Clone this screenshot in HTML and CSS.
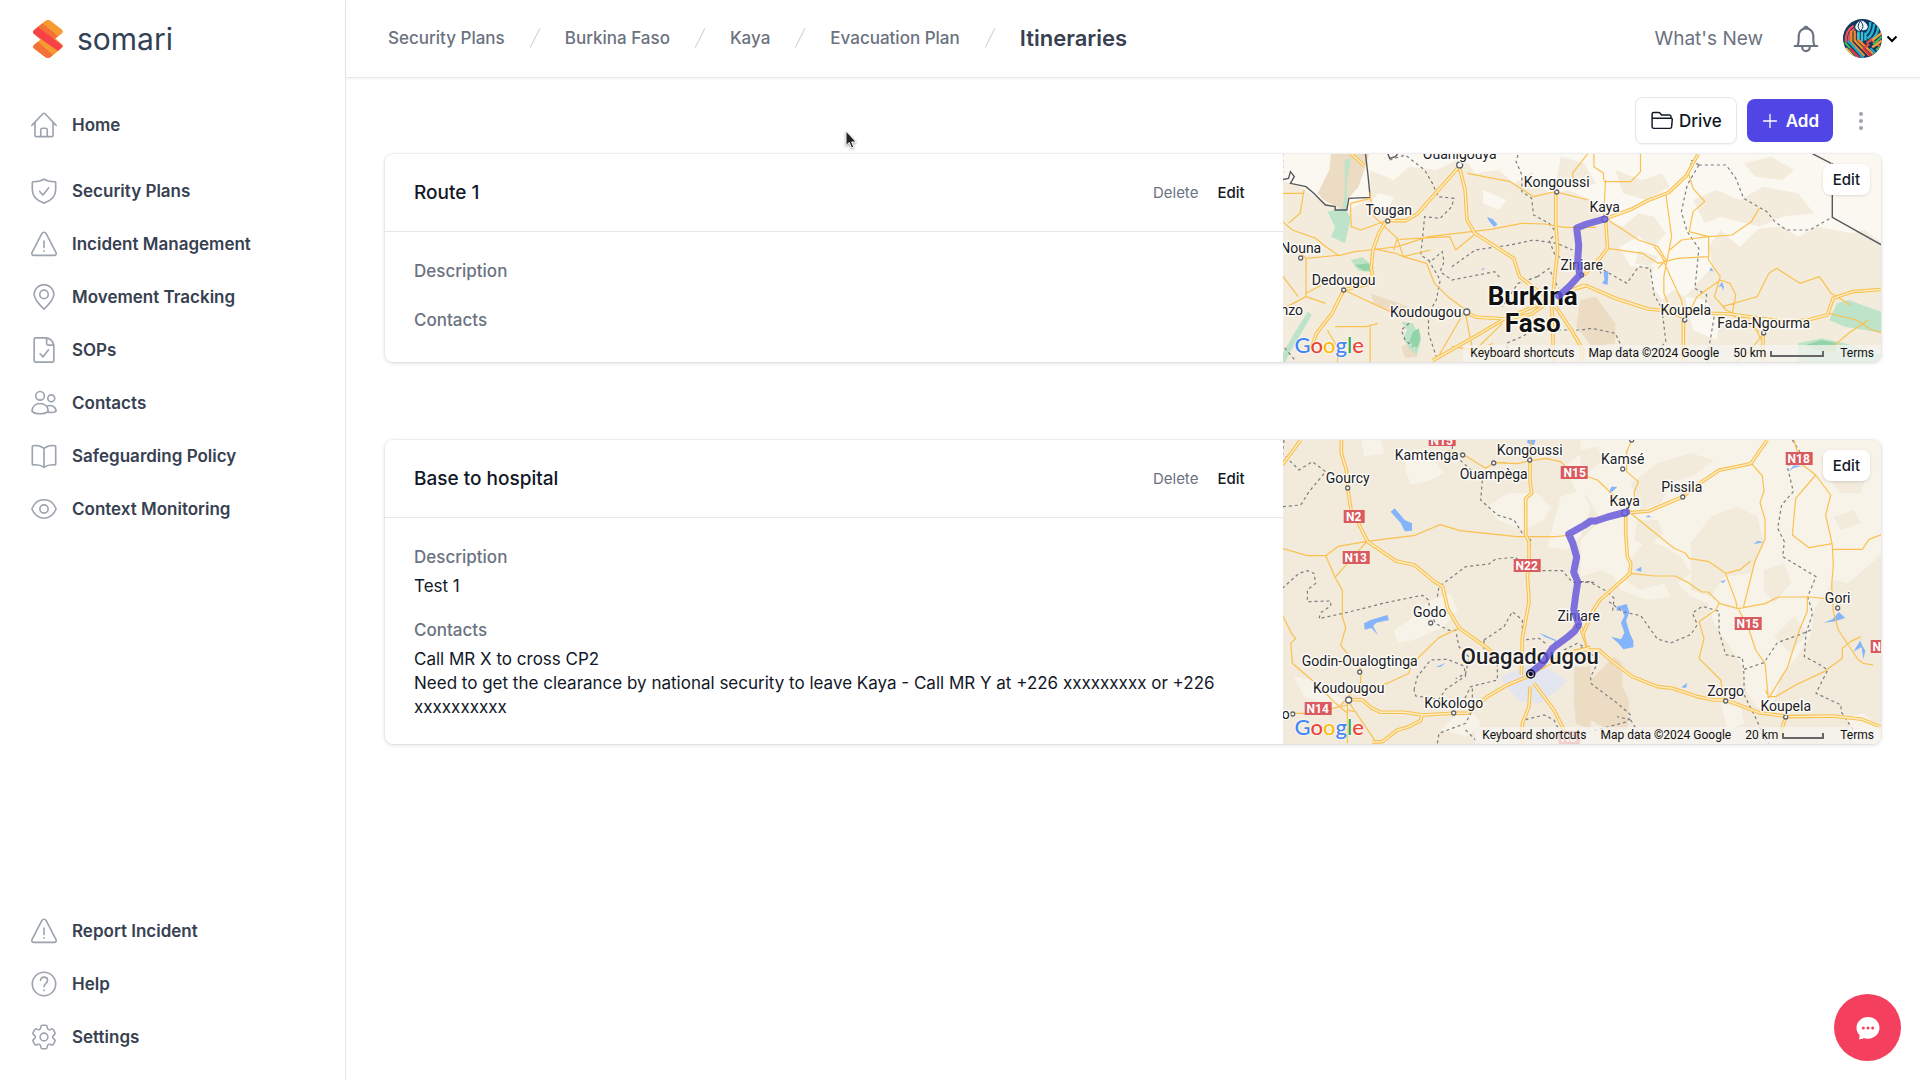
FILE: index.html
```html
<!DOCTYPE html>
<html lang="en">
<head>
<meta charset="utf-8">
<title>Itineraries - Somari</title>
<link rel="stylesheet" href="styles.css">
</head>
<body>
<svg class="sprite" aria-hidden="true">
  <symbol id="i-home" viewBox="0 0 24 24"><path d="M.8 12.3 11 1.6a1.4 1.4 0 0 1 2 0L23.2 12.3M3.7 9.5v12.2a1 1 0 0 0 1 1h14.6a1 1 0 0 0 1-1V9.5M9 22.5v-6A1.5 1.5 0 0 1 10.500 15h3a1.500 1.500 0 0 1 1.500 1.500v6"/></symbol>
  <symbol id="i-shield" viewBox="0 0 24 24"><path d="M12 1C9.300 2.900 6 3.500 2.200 3.400c-.6 0-1 .4-1 1v6.300C1.200 16.500 5 21 12 23.200c7-2.200 10.800-6.700 10.800-12.500V4.400c0-.6-.4-1-1-1C18 3.500 14.700 2.900 12 1ZM8 12.400l3 3.300 5.200-6.500"/></symbol>
  <symbol id="i-alert" viewBox="0 0 24 24"><path d="M10.100 2.300.9 19.900c-.7 1.300.2 2.600 1.600 2.600h19c1.400 0 2.300-1.300 1.600-2.600L13.900 2.300c-.9-1.600-3-1.600-3.800 0ZM12 9.300v6M12 18.200v.4"/></symbol>
  <symbol id="i-pin" viewBox="0 0 24 24"><path d="M12 23.200C8.500 19.700 2.900 14.500 2.900 9.700a9.100 9.100 0 0 1 18.200 0c0 4.800-5.600 10-9.100 13.500Z"/><circle cx="12" cy="9.600" r="3.900"/></symbol>
  <symbol id="i-doc" viewBox="0 0 24 24"><path d="M14.200.8H4.300a1.400 1.400 0 0 0-1.400 1.400v19.600a1.400 1.400 0 0 0 1.400 1.400h15.400a1.400 1.400 0 0 0 1.400-1.400V7.500Q20 2 14.200.8Q14.600 3 14.400 5.800Q14.500 7.500 16 7.500h5M8.400 15.500l2.800 2.800 5-6.500"/></symbol>
  <symbol id="i-users" viewBox="0 0 24 24"><circle cx="8.400" cy="5.400" r="4"/><circle cx="18.700" cy="7.700" r="3.200"/><path d="M.9 19.500c.3-4.300 3.300-7 7.500-7s7.200 2.700 7.500 7c-1.500 1.800-4.300 2.400-7.500 2.400S2.400 21.300.9 19.500ZM14.400 15.500c3.700-2.400 8.200-.9 8.800 4-1.600 1.100-4.400 1.600-7.600.9"/></symbol>
  <symbol id="i-book" viewBox="0 0 24 24"><path d="M12 5C9.300 2.800 5.800 2 1.900 2.500c-.5.100-.7.400-.7.900v16c0 .6.400.9.900.8 3.700-.4 7 .2 9.900 2.300 2.900-2.100 6.200-2.700 9.900-2.300.5.100.9-.2.900-.8v-16c0-.5-.2-.8-.7-.9C18.200 2 14.700 2.800 12 5ZM12 5v17"/></symbol>
  <symbol id="i-eye" viewBox="0 0 24 24"><path d="M.8 11.800C3 6.500 7 3.500 12 3.500s9 3 11.200 8.300C21 17.500 17 20.500 12 20.500s-9-3-11.200-8.700Z"/><circle cx="12" cy="12" r="3.800"/></symbol>
  <symbol id="i-help" viewBox="0 0 24 24"><circle cx="12" cy="12" r="10.800"/><path d="M8.800 8.800c0-1.800 1.400-3.100 3.200-3.100s3.300 1.300 3.300 3.100c0 2.600-3.300 2.700-3.300 5.700M12 17.600v.5"/></symbol>
  <symbol id="i-cog" viewBox="2 2 20 20"><path d="M9.594 3.940c.09-.542.56-.94 1.110-.94h2.593c.55 0 1.020.398 1.110.94l.213 1.281c.063.374.313.686.645.87.074.04.147.083.22.127.325.196.72.257 1.075.124l1.217-.456a1.125 1.125 0 0 1 1.370.49l1.296 2.247a1.125 1.125 0 0 1-.26 1.431l-1.003.827c-.293.241-.438.613-.43.992a7.723 7.723 0 0 1 0 .255c-.008.378.137.75.43.991l1.004.827c.424.35.534.955.26 1.430l-1.298 2.247a1.125 1.125 0 0 1-1.369.491l-1.217-.456c-.355-.133-.75-.072-1.076.124a6.470 6.470 0 0 1-.22.128c-.331.183-.581.495-.644.869l-.213 1.281c-.09.543-.56.94-1.110.94h-2.594c-.55 0-1.019-.398-1.110-.94l-.213-1.281c-.062-.374-.312-.686-.644-.87a6.520 6.520 0 0 1-.22-.127c-.325-.196-.72-.257-1.076-.124l-1.217.456a1.125 1.125 0 0 1-1.369-.49l-1.297-2.247a1.125 1.125 0 0 1 .26-1.431l1.004-.827c.292-.24.437-.613.43-.991a6.932 6.932 0 0 1 0-.255c.007-.38-.138-.751-.43-.992l-1.004-.827a1.125 1.125 0 0 1-.26-1.430l1.297-2.247a1.125 1.125 0 0 1 1.370-.491l1.216.456c.356.133.751.072 1.076-.124.072-.044.146-.086.22-.128.332-.183.582-.495.644-.869l.214-1.280Z"/><circle cx="12" cy="12" r="3"/></symbol>
  <symbol id="i-slash" viewBox="0 0 20 20"><path d="M5.555 17.776l8-16 .894.448-8 16-.894-.448z"/></symbol>
</svg>

<div class="app">
  <aside class="sidebar">
    <a class="brand" href="#">
      <svg class="brand-mark" viewBox="0 0 30 38" aria-hidden="true">
        <defs><clipPath id="mark"><path d="M12.500.8Q15-1 17.500.8L28.800 9.500Q31 11.500 28.800 13.500L22.500 18.500 28.600 24Q31 26 28.800 28L17.500 37.200Q15 39 12.500 37.200L1 28.500Q-.8 26.500 1.200 24.800L7.500 19.500 1 14Q-1 12 1 10Z"/></clipPath></defs>
        <g clip-path="url(#mark)">
          <path fill="#f79a31" d="M0 0h30v38H0z"/>
          <path fill="#f47238" d="M9 3 25 16 20 20 2 8ZM4 21 20 35 14 40-3 26Z"/>
          <path fill="#f94149" d="M5 7 30 26 25 31-2 12Z"/>
        </g>
      </svg>
      <span>somari</span>
    </a>
    <nav class="nav" aria-label="Main">
      <a class="nav-home" href="#"><svg><use href="#i-home"/></svg>Home</a>
      <a href="#"><svg><use href="#i-shield"/></svg>Security Plans</a>
      <a href="#"><svg><use href="#i-alert"/></svg>Incident Management</a>
      <a href="#"><svg><use href="#i-pin"/></svg>Movement Tracking</a>
      <a href="#"><svg><use href="#i-doc"/></svg>SOPs</a>
      <a href="#"><svg><use href="#i-users"/></svg>Contacts</a>
      <a href="#"><svg><use href="#i-book"/></svg>Safeguarding Policy</a>
      <a href="#"><svg><use href="#i-eye"/></svg>Context Monitoring</a>
    </nav>
    <nav class="nav nav-bottom" aria-label="Support">
      <a href="#"><svg><use href="#i-alert"/></svg>Report Incident</a>
      <a href="#"><svg><use href="#i-help"/></svg>Help</a>
      <a href="#"><svg class="cog"><use href="#i-cog"/></svg>Settings</a>
    </nav>
  </aside>

  <div class="page">
    <header class="topbar">
      <nav class="crumbs" aria-label="Breadcrumb">
        <a href="#">Security Plans</a>
        <svg><use href="#i-slash"/></svg>
        <a href="#">Burkina Faso</a>
        <svg><use href="#i-slash"/></svg>
        <a href="#">Kaya</a>
        <svg><use href="#i-slash"/></svg>
        <a href="#">Evacuation Plan</a>
        <svg><use href="#i-slash"/></svg>
        <h1>Itineraries</h1>
      </nav>
      <div class="topbar-right">
        <a class="whats-new" href="#">What's New</a>
        <button class="bell" aria-label="Notifications">
          <svg viewBox="0 0 24 26"><path d="M1.500 19.500h21M3.800 19.300c1.400-1.200 1.400-3.200 1.400-6.800V10a6.800 6.800 0 0 1 13.600 0v2.500c0 3.600 0 5.600 1.400 6.800M10.500 3.200a1.500 1.500 0 0 1 3 0M8.500 20v.8a3.500 3.500 0 0 0 7 0V20"/></svg>
        </button>
        <button class="account" aria-label="Account menu">
          <svg class="avatar" viewBox="0 0 40 40">
            <defs><clipPath id="av"><circle cx="20" cy="20" r="20"/></clipPath></defs>
            <g clip-path="url(#av)" fill="none" stroke-width="2.400">
              <path fill="#12365c" d="M0 0h40v40H0z"/>
              <path stroke="#e8525c" d="M3 24Q2 12 11 7M6 25Q5 14 12 10"/>
              <path stroke="#f58a2c" d="M8.500 12V24L22 38M12 12V22L27 37M15.500 14V21L31 36"/>
              <path stroke="#35c4dd" d="M16 21V12M19.500 23V13M23 22V14"/>
              <path stroke="#27b6d4" d="M25 20Q31 16 32 5M27 23Q36 17 36 8M24 15Q28 11 28 3"/>
              <path stroke="#e84a3b" d="M24 25 29 21 40 30M22 29 27 26"/>
              <path stroke="#f5a13a" d="M30 22 40 14M30 29 40 22"/>
              <path stroke="#3bb85a" d="M31 26 40 18M2 24 16 40M34 32l6-5"/>
              <path stroke="#1ea7c9" d="M5 22 21 40M28 30l8 8"/>
              <path stroke="#e02a50" d="M7 30l10 10M21 30l10 10"/>
              <path stroke="#f7c948" d="M3 30l9 10"/>
              <path fill="#eaf6fb" stroke="#12365c" stroke-width="1" d="M18.500 1Q12 4 12 9Q15 14 18 12Q25 13 26 8Q24 2 18.500 1ZM18 2Q13 8 18 12Q23 8 18 2"/>
            </g>
          </svg>
          <svg class="chevron" viewBox="0 0 12 8"><path d="M1.500 1.500 6 6l4.500-4.500"/></svg>
        </button>
      </div>
    </header>

    <main class="content">
      <div class="toolbar">
        <button class="btn btn-outline">
          <svg viewBox="0 0 24 20"><path d="M1.200 7.500V3a1.800 1.800 0 0 1 1.800-1.800h5.200a2 2 0 0 1 1.500.7L11.500 4H20a1.800 1.800 0 0 1 1.800 1.800V7.500M2.600 7.500h19.400a1.200 1.200 0 0 1 1.200 1.200L22.500 17a1.800 1.800 0 0 1-1.800 1.600H3A1.800 1.800 0 0 1 1.200 17V8.500a1 1 0 0 1 1.400-1Z"/></svg>
          Drive
        </button>
        <button class="btn btn-primary">
          <svg viewBox="0 0 16 16"><path d="M8 1.500v13M1.500 8h13"/></svg>
          Add
        </button>
        <button class="more" aria-label="More options">
          <svg viewBox="0 0 4 20"><circle cx="2" cy="3" r="2"/><circle cx="2" cy="10" r="2"/><circle cx="2" cy="17" r="2"/></svg>
        </button>
      </div>

      <article class="card">
        <div class="card-info">
          <div class="card-head">
            <h2>Route 1</h2>
            <button class="link muted">Delete</button>
            <button class="link">Edit</button>
          </div>
          <dl>
            <dt>Description</dt>
            <dd></dd>
            <dt>Contacts</dt>
            <dd></dd>
          </dl>
        </div>
        <div class="map">
          <svg class="map-art" viewBox="0 0 599 208" preserveAspectRatio="xMidYMid slice" role="img" aria-label="Map of Route 1">
            <defs>
              <g id="m1-major" class="road-lines" transform="translate(-2 -4) scale(.389 .3333)">
                <path d="M180 10l35 38M276 212h45l30-20 110-145M459 50l15 70 5 90 20 40 40 30 60 45 15 55 50 45 40 30M232 360l5-60 15-50 20-38M235 360l0 40-40 10-33 10-30 70-40 60-15 50M475 487l30 15 80 5 60-15 60-50 50-25 30-10 80 40 80 30 90 10 120 5 90 15 50 8 60-5 50-15 15-50 50-20 90-8M575 507l-65 45-60 40-60 40M707 130v90l5 80-10 110-5 60 5 165M707 470l40 70 30 60-5 35M835 205l5 90-20 30-40 50M833 207l70-30 40-25 55-25 45-50 30-65M1035 510v125M780 405l-60 30M690 450l-110 55M1240 550v85"/>
              </g>
            </defs>
            <path class="land" d="M0 0h599v208H0z"/>
            <g transform="translate(-2 -4) scale(.389 .3333)">
              <path class="pale" d="M0 0H640L655 60 600 100 560 60 500 70 470 20 400 60 330 50 290 90 230 60V140L170 185 100 150 50 110 0 90ZM640 0H1560V290L1500 240 1470 250 1380 230 1330 260 1290 230 1230 235 1180 290 1130 240 1100 290 1110 350 1070 400 1040 440 1010 420 980 450 950 400 960 350 900 350 870 290 920 260 960 290 990 250 960 200 920 190 880 230 830 210 800 150 740 120 690 130 650 90ZM1040 440l50 10 40 60-10 60-60-30ZM250 130l40 10-10 30-60 10ZM520 120l60 30-20 30-40-20Z"/>
              <path class="land" d="M720 20l60 20 30 60-50 20-50-40ZM860 60l70 30 50-20 20 40-60 40-60-20ZM1060 150l60-30 60 30 60-40 90 20 40 60-80 10-60 30-100-30-40 20ZM1190 40l70-20 60 40-30 30-70-10ZM330 90l40-20 20 30-40 30ZM920 300l50 20-20 30-40-10Z"/>
              <path class="sand" d="M130 0H230L215 60 200 110 170 150 170 185 110 150 95 130 125 60ZM770 450l40-10 50 80v60l-60 10-40-60ZM230 430l50 20 70 30-10 30-60-30-40-20ZM310 590l40-20v50l-30 5Z"/>
              <path class="park" d="M165 30l15-5-10 70 0 90 10 20-15 75-35-20 10-30-20-45 40-10 5-60ZM180 330l30-8 30 30-5 15-35-5ZM310 515l30 5 10 25 10 30-10 40-20-20-15-30 10-25ZM0 620l40-80 30-55 10 10-30 60-30 60-10 30ZM1430 460l30-10 70 30 30 10v60l-60-10-50-10-40-20ZM1330 580l60-15 60 15 110 40v20H1330Z"/>
              <path class="park-deep" d="M190 345l35-5 10 20-20 3ZM340 545l15-10 5 30-10 30-20-20ZM1350 585l40-15 40 10-5 25-50-5Z"/>
              <path class="water" d="M530 200l15 8 12 15-8 8-12-16ZM830 365l12-2 0 20-2 22-14-5 6-10ZM1105 352l8 12-10-2ZM1135 395l4 15-2 12-4-14-8 4ZM515 358l10-5-5 8ZM704 122l8-6v14l-6 3Z"/>
              <path class="city" d="M685 465l25-5 15 15-25 12Z"/>
              <g class="dashes">
                <path d="M5 10v60M280 30l40-15 50 45 20 40 15 40 40 5-5 25-30 35-40-5-5 60-5 55 25 20 30-30 5 30-10 30 30 25 110-25 15 20M610 15l-5 20 15 40 0 50 25 20 5 50 40 25 20 30-20 20 15 45 40 20 70 10 10 30M440 350l60-50 90-15 60-15 60 10 40 20M660 380l30-25 15 40 10 20M660 380l-50 20-40 70M830 360l60 40 30-50 30 5 10 80 20 40 10 100-50 70-20 30M1075 45l-20-15 0 25M1075 45l70 0 25 40 20 60 60 40 20 30 30 25 60 0 60-40M1075 45l-30 60-15 80 15 60 30 50 -10 120 30 20-5 50 25 10-20 140M590 630l-10-50 40-20 30-20 60 0 60 0 30-5 60 15 25 60 10 20M380 330l30 60-10 60-20 40 0 60 20 70M0 580l40 55M330 520l-20 20 10 30 20 20"/>
              </g>
              <g class="border">
                <path d="M0 90l20-5 5-20 10 15-10 20 40 10 20 20 30 35 25 5 0 10 30 0 5-35 55-3-5-60-8-80M275 10l5 15 15-5 5-8M1365 10l50 30M1418 40V202l130 85"/>
              </g>
              <g class="minor">
                <path d="M0 210l30 30 60 25 20 20 40 32 40-12 40-5 70-10 80-30 160-22 80-18 60 2 50 10h80M180 210l0-50 50-15 0-20M230 140l10 60 60 65-10 35M276 210l-70 30-25-10v-20M300 265l15 55-20-10-60-15M315 320l70-20M450 300l50-48M450 300l-15-40-130 8M315 320l60 20 20 60 35 40 40 35M35 290l30 35 0 115-65 40M65 430l40-25M65 440l50 20M162 420l120 65M65 325l90-10M0 370l45 70M475 490l20 120 50-30M470 490l-70 140M440 590l60 10 70-80M140 530h80l30-10M230 530v110M480 70l110 25 60 45 55-15 85 25M790 10l-40 60 5 35M830 90v-20l-25-20V12M830 95h70l25-30 0-55M835 90l-5 115M835 205l85 65 50 20 20 40-20 25M990 130l15 130-10 60-10 60M840 295l90 15 40 30 50-15 80-5M960 290l20 30 20 55 30 75 10 60M985 380l0 50 20 60 35 20M1000 300l30-30 70-10M1050 75l10 40 30 40-30 30-10 60 50 15v70l30 50-15 60 30 40 70 40 20 50M1100 260l60-5 50-40 20-40M1130 390l-60 50-30 70M1130 390l25 10 15 35-10 60 70 50M1135 470l60-20 30-10 30-70 20-15 60 45 50-20 30 50 50 35M1250 540l-50 70-30 25M1410 490l70 20 40 30 30 10M1400 610l60-60 50-40M60 120l-10 70-30 30M0 130l60 0M120 540l30 60-5 40"/>
              </g>
            </g>
            <use href="#m1-major" class="major"/>
            <use href="#m1-major" class="major-core"/>
            <g class="towns">
              <circle cx="177" cy="11" r="3"/><circle cx="274" cy="38" r="2"/><circle cx="322" cy="65" r="3"/><circle cx="105" cy="67" r="2"/><circle cx="18" cy="104" r="2"/><circle cx="61" cy="136" r="2"/><circle cx="184" cy="158" r="3"/><circle cx="299" cy="121" r="2"/><circle cx="402" cy="166" r="2"/><circle cx="481" cy="179" r="2"/>
            </g>
            <g class="places">
              <text x="177" y="5">Ouahigouya</text><text x="274" y="33">Kongoussi</text><text x="322" y="58">Kaya</text><text x="106" y="61">Tougan</text><text x="18" y="99">Nouna</text><text x="61" y="131">Dedougou</text><text x="9" y="161">nzo</text><text x="143" y="163">Koudougou</text><text x="299" y="116">Ziniare</text><text x="403" y="161">Koupela</text><text x="481" y="174">Fada-Ngourma</text>
              <text class="country" x="250" y="151">Burkina</text><text class="country" x="250" y="178">Faso</text>
            </g>
            <path class="route" d="M322 65 304 70 294 74 296 91 295 107 297 121 287 132 276 142"/>
          </svg>
          <button class="map-edit">Edit</button>
          <div class="google" aria-label="Google"><span class="g-blue">G</span><span class="g-red">o</span><span class="g-yellow">o</span><span class="g-blue">g</span><span class="g-green">l</span><span class="g-red">e</span></div>
          <div class="map-foot"><button>Keyboard shortcuts</button><span>Map data ©2024 Google</span><span class="scale">50 km<i class="bar bar-50"></i></span><a href="#">Terms</a></div>
        </div>
      </article>

      <article class="card">
        <div class="card-info">
          <div class="card-head">
            <h2>Base to hospital</h2>
            <button class="link muted">Delete</button>
            <button class="link">Edit</button>
          </div>
          <dl>
            <dt>Description</dt>
            <dd>Test 1</dd>
            <dt>Contacts</dt>
            <dd>Call MR X to cross CP2<br>Need to get the clearance by national security to leave Kaya - Call MR Y at +226 xxxxxxxxx or +226 xxxxxxxxxx</dd>
          </dl>
        </div>
        <div class="map">
          <svg class="map-art" viewBox="0 0 599 304" preserveAspectRatio="xMidYMid slice" role="img" aria-label="Map of Base to hospital">
            <defs>
              <g id="m2-left" class="road-lines" transform="translate(-2 -10) scale(.3333)">
                <path d="M60 30 5 105M182 30v40l15 50 4 55 10 65 25 45 25 50 85 58 55 12 60 50 25 15 15 65 35 60 85 60 25 25M245 810l25 22 30 15h70l55 8 95-5 40 0 60-50 60-35 60-25M200 808l45 2M425 852l-5 20-40 20-30 8-45 35-30 2M748 90l0 60 5 40-18 15 0 110 10 20v80l-5 20 5 80-20 110-3 110M748 770l-3 60-20 50 0 60M760 760l60 80 30 60 10 40M770 720l90-50 70-18"/>
              </g>
              <g id="m2-right" class="road-lines" transform="translate(298 -10) scale(.3333)">
                <path d="M150 248l55-5 100-42 50-40 60-40 95-20 50-71M135 250v60l5 70 10 20-2 30-90 80-20 30-30 70M0 660l55 0 40 35 60 45 75 30 45 5 75 25 50 10h35l100 38 90 12 130-2 90 10 60 25M615 862l-20 60"/>
              </g>
            </defs>
            <path class="land-2" d="M0 0h599v304H0z"/>
            <g transform="translate(-2 -10) scale(.3333)">
              <path class="pale-2" d="M370 60l80 20 40 50-40 20-60 15-15-40ZM240 20l60 10 10 40-60 10ZM620 230l60-40 90 0 40 40-20 40-60 30-80-30ZM840 200l60-20 30 50-30 90-40 40-60-10ZM340 600l60-40 50-50 60-20 20 50-40 50-90 40-50 10ZM480 900l40-40 60-10 20 30-40 40ZM40 740l60 10 90 60-30 20-90-30ZM850 110l80-60V200l-40-10Z"/>
              <path class="city" d="M660 740l50-20 40-20 60 20 50 30-30 30-50 40-60-5-40-40Z"/>
              <path class="sand-2" d="M880 740l50-40V900l-45-20Z"/>
              <path class="water" d="M330 245l12-10 30 35 22 10v22l-22 2-12-25ZM250 580l20-10 50-15 5 15-38 8-10 10 15 28-20-22-20 5ZM740 30h25l-5 15-20-5ZM776 608l50 22-4 40 0-38-30-12ZM465 712l30-14-15 12Z"/>
              <g class="dashes">
                <path d="M10 30l-5 40 50 50 40-25 40 30-50 60-25 40-55 5M5 475l50-45 25-8 20 8 5 30-25 20 0 35 70-2 0 15-30 20-5 18 90-20 110-28 110-22 20 15 0 30 20 40 40 20 20 0 10 50 30 30 -10 50-30 15M515 30v40l90 80-5 60 50 45 50 15 25 40 25 20-5 50M470 500l5-30 80-60 70-8 20-15 60-5 20 20 60 20 60 0 30 35 70 0M610 630l60-40 25-45 30 25 0 60 50-5 25 20M610 630l0 40 40 30 0 50-80 20-20 40M400 780l10-40 40-50 50-2 50 20 5 30-60 40-20 30-70-10ZM470 940l5-30 80-30 20-40 0-70M555 900l40 40M720 900l10-30 60-15 30 15 20 40M850 660l40-20 40 20"/>
              </g>
              <g class="minor">
                <path d="M5 355l75 22h55l38-28 85-15 145-18 75-32 60 18 170 18 20 0 100 0 40-5M135 377l28 65 95-107M163 442l22 40v80l10 30-15 55 60 70 0 40-60 70M5 555l30 60 10 10-15 15 5 60 70 60 60 60 35 30M200 810l0 130M200 810l85 125M200 840l20 5M500 60l50 15 65 40 25-17 70 3 35-8 50-8 45 10 30 30M535 595l-60 28-85 82-5 25-65 30-80 25M30 850h60l110-25M895 590l25 70M750 30v55M640 98l35 0"/>
              </g>
            </g>
            <g transform="translate(298 -10) scale(.3333)">
              <path class="pale-2" d="M0 30H905V370L850 420 800 460 760 450 700 540 690 620 650 680 600 740 570 850 530 830 500 790 480 700 440 640 400 580 380 520 330 500 290 460 330 430 300 380 250 350 200 330 160 370 130 450 180 480 250 460 270 500 200 510 120 480 100 440 60 420 0 440V330L60 270 20 200 0 170ZM800 860l50-10 50 50v40h-80ZM420 820l60 10 10 50-50 20Z"/>
              <path class="land-2" d="M150 160l80-60 100-30 70 20-50 40-80 30-30 60-60 20ZM330 340l60-80 80-30 60 30 20 80-40 90-80 10-40 60-60-20ZM0 60l50-10 20 40-50 40-20-10ZM720 80l60 30 80 20-20 60-60 0-50-60ZM580 620l60-60 40 50-50 60ZM550 420l60-20 20 60-50 60-30-40ZM170 270l60 0 20 40-50 40-40-20ZM760 260l60-20 20 40-60 20Z"/>
              <path class="sand-2" d="M-20 780l40-20 80-80 25 20v70l20 40-5 90-60 0-100-60ZM-20 710l40 0-20 50-20 5Z"/>
              <path class="water" d="M108 530l30-8 8 25-10 25 12 40 10 20 0 20-30 6-15-18-22-20 30 8 10-20-10-30 10-20-8-20-15 5ZM84 190l8-20 18 0-12 12ZM164 420l18-10v15ZM195 262l8-6 10 6ZM518 342l14-10 16 5-14 3ZM418 455l18-6-8 10ZM302 772l18-14-4 16ZM730 578l25-10 20-22 18 18-30 10ZM838 620l6 30-26 15 20-32 16 30-6 25ZM624 124l15-18 25 2-25 6Z"/>
              <g class="dashes">
                <path d="M0 455l25 0 55 30 20 20-5 45M85 515l40 30 55 12 50 70 40 12 60-25 20-30-15-35 30-20 50 15 0 60 20 70 50 10 5 50 0 60 40 80 20 50 20 25 5 70M635 30l25 40-40 40 18 75-35 40-12 70 20 40-5 45 100 60-25 60 15 50-20 60-5 70 40 20 30 20-35 70 75 35 0 20 60 90M490 718l60-20 40-60 70-25 35-15M0 650l55 40-25 50 0 20 80 60 40 35-10 20-110 30M150 870l30 50M150 870l-40-10"/>
              </g>
              <g class="minor">
                <path d="M153 30l-15 35 0 60 35 30-12 30 0 30M15 138l35 12 100 95M150 250l130 105 35 15 10 15 60 10 50 35 45-12 30-25M148 430l75 8 60 0 40 20 40 28 20 0 35 35 55 15 50-10 30-5 40-20 95 0 50 5 50 0M510 98l35 40 5 45-12 35 15 50 0 60-30 65-15 60-20 80M435 432l30 80 5 25M415 520l-10 20-50 35 15 50-15 60 65 65 10 60M475 540l30 60 20 60 28 40 10 105M680 498v45l-25 60-35 110-55 90M640 30l20 70 45 35 45 60-15 60 20 90 3 60-5 60 5 80 15 55 60 90 15 10 30 5M705 135l-60 70-10 110 50 38 70-12M755 358h90l20-30 40-15M565 800l20 0 60-35 85-40 55-40 0-30 25-20 30-15M565 802l-10-20M5 590l15 65"/>
              </g>
            </g>
            <use href="#m2-left" class="major"/>
            <use href="#m2-right" class="major"/>
            <use href="#m2-left" class="major-core"/>
            <use href="#m2-right" class="major-core"/>
            <g class="towns">
              <circle cx="65" cy="48" r="2"/><circle cx="180" cy="15" r="2"/><circle cx="211" cy="23" r="2"/><circle cx="247" cy="20" r="2"/><circle cx="148" cy="183" r="2"/><circle cx="77" cy="232" r="2"/><circle cx="66" cy="260" r="3"/><circle cx="10" cy="274" r="2"/><circle cx="171" cy="273" r="2"/><circle cx="340" cy="29" r="2"/><circle cx="349" cy="0" r="2"/><circle cx="400" cy="57" r="2"/><circle cx="342" cy="73" r="3"/><circle cx="296" cy="186" r="2"/><circle cx="555" cy="168" r="2"/><circle cx="443" cy="261" r="2"/><circle cx="503" cy="277" r="2"/>
            </g>
            <g class="shields">
              <path d="M146-6h27V6h-27ZM278 26h27v13h-27ZM61 70h21v13H61ZM60 111h27v13H60ZM231 119h27v13h-27ZM22 262h27v13H22ZM503 12h27v13h-27ZM452 177h27v13h-27ZM588 200h27v13h-27ZM276 291h21v13h-21Z"/>
              <text x="159" y="5">N15</text><text x="292" y="37">N15</text><text x="71" y="81">N2</text><text x="73" y="122">N13</text><text x="244" y="130">N22</text><text x="35" y="273">N14</text><text x="516" y="23">N18</text><text x="465" y="188">N15</text><text x="601" y="211">N16</text><text x="286" y="302">N5</text>
            </g>
            <g class="places">
              <text x="65" y="43">Gourcy</text><text x="144" y="20">Kamtenga</text><text x="247" y="15">Kongoussi</text><text x="211" y="39">Ouampèga</text><text x="340" y="24">Kamsé</text><text x="399" y="52">Pissila</text><text x="342" y="66">Kaya</text><text x="147" y="177">Godo</text><text x="77" y="226">Godin-Oualogtinga</text><text x="66" y="253">Koudougou</text><text x="171" y="268">Kokologo</text><text x="3" y="279">o</text><text x="296" y="181">Ziniare</text><text x="555" y="163">Gori</text><text x="443" y="256">Zorgo</text><text x="503" y="271">Koupela</text>
              <text class="capital" x="247" y="224">Ouagadougou</text>
            </g>
            <path class="route" d="M344 72 325 77 313 81 308 81 302 85 286 94 290 103 294 117 291 132 295 142 293 155 291 170 296 184 292 191 285 197 270 208 260 223 249 232"/>
            <circle class="capital-ring" cx="248" cy="234" r="4"/><circle cx="248" cy="234" r="2"/>
          </svg>
          <button class="map-edit">Edit</button>
          <div class="google" aria-label="Google"><span class="g-blue">G</span><span class="g-red">o</span><span class="g-yellow">o</span><span class="g-blue">g</span><span class="g-green">l</span><span class="g-red">e</span></div>
          <div class="map-foot"><button>Keyboard shortcuts</button><span>Map data ©2024 Google</span><span class="scale">20 km<i class="bar bar-20"></i></span><a href="#">Terms</a></div>
        </div>
      </article>
    </main>
  </div>
</div>

<button class="chat" aria-label="Open chat">
  <svg viewBox="0 0 24 24"><path d="M12 1C5.600 1 .5 5.800.5 11.800c0 3 1 5.200 2.900 7.100.3 1.500.1 3-.6 4.300 1.700.2 3.300-.2 4.900-.9 1.300.3 2.800.4 4.300.4 6.400 0 11.500-4.700 11.500-10.900S18.400 1 12 1Z"/><g class="chat-dots"><circle cx="7.300" cy="12" r="1.500"/><circle cx="12" cy="12" r="1.500"/><circle cx="16.700" cy="12" r="1.500"/></g></svg>
</button>
<svg class="pointer" viewBox="0 0 12 20" aria-hidden="true"><path d="M1 1v14.500l3.300-3L6.500 18l2.300-1-2.200-5h4.600Z"/></svg>
</body>
</html>
```
FILE: styles.css
```css
* { box-sizing: border-box; }
body {
  margin: 0;
  font-family: Inter, "Liberation Sans", sans-serif;
  font-size: 17px;
  line-height: 24px;
  color: #111827;
  background: #fff;
}
a { color: inherit; text-decoration: none; }
button { font: inherit; color: inherit; background: none; border: 0; padding: 0; cursor: pointer; }
h1, h2, dl, dd { margin: 0; }
svg { display: block; flex: none; }
.sprite { position: absolute; width: 0; height: 0; }

.app { display: flex; min-height: 100vh; }

/* Sidebar */
.sidebar {
  display: flex;
  flex-direction: column;
  flex: none;
  width: 346px;
  padding: 0 30px 17px 31px;
  border-right: 1px solid #e5e7eb;
}
.brand {
  display: flex;
  align-items: center;
  gap: 14px;
  height: 77px;
  padding-left: 2px;
  font-size: 30px;
  color: #334155;
}
.brand-mark { width: 30px; height: 38px; }
.nav { padding-top: 21px; }
.nav a {
  display: flex;
  align-items: center;
  gap: 15px;
  height: 53px;
  font-weight: 600;
  color: #374151;
}
.nav .nav-home { margin-bottom: 13px; }
.nav svg { width: 26px; height: 26px; fill: none; stroke: #9ca3af; stroke-width: 1.5; stroke-linecap: round; stroke-linejoin: round; }
.nav .cog { stroke-width: 1.2; }
.nav-bottom { margin-top: auto; padding-top: 0; }

/* Top bar */
.page { flex: 1; min-width: 0; }
.topbar {
  display: flex;
  align-items: center;
  justify-content: space-between;
  height: 78px;
  padding: 0 22px 0 42px;
  border-bottom: 1px solid #e5e7eb;
  box-shadow: 0 1px 3px rgba(0, 0, 0, .05);
}
.crumbs { display: flex; align-items: center; gap: 18px; padding-bottom: 2px; font-weight: 500; color: #6b7280; }
.crumbs svg { width: 24px; height: 24px; fill: #d1d5db; }
.crumbs h1 { font-size: 22px; font-weight: 600; color: #374151; }
.topbar-right { display: flex; align-items: center; color: #6b7280; }
.whats-new { font-size: 19px; }
.bell { margin: 0 24px 0 30px; }
.bell svg { width: 26px; height: 28px; fill: none; stroke: #6b7280; stroke-width: 2; stroke-linecap: round; stroke-linejoin: round; }
.account { display: flex; align-items: center; gap: 4px; }
.avatar { width: 39px; height: 39px; }
.chevron { width: 12px; height: 8px; fill: none; stroke: #000; stroke-width: 2; }

/* Toolbar */
.content { padding: 19px 39px 40px; }
.toolbar { display: flex; align-items: center; justify-content: flex-end; gap: 10px; margin-bottom: 10px; }
.btn { display: flex; align-items: center; gap: 6px; border-radius: 8px; font-weight: 500; }
.btn svg { fill: none; stroke: currentColor; stroke-linecap: round; stroke-linejoin: round; }
.btn-outline { height: 47px; padding: 0 14px 0 15px; border: 1px solid #e5e7eb; box-shadow: 0 1px 2px rgba(0, 0, 0, .05); }
.btn-outline svg { width: 22px; height: 19px; stroke-width: 1.6; }
.btn-primary { gap: 8px; height: 43px; padding: 0 14px 0 15px; background: #4f46e5; color: #fff; font-weight: 600; }
.btn-primary svg { width: 16px; height: 16px; stroke-width: 1.3; }
.more { width: 36px; margin-right: 2px; padding: 8px 0; }
.more svg { width: 4px; height: 20px; margin: auto; fill: #9ca3af; }

/* Itinerary cards */
.card {
  display: grid;
  grid-template-columns: 3fr 2fr;
  border-radius: 8px;
  background: #fff;
  box-shadow: 0 0 0 1px rgba(0, 0, 0, .03), 0 1px 4px rgba(0, 0, 0, .14);
}
.card + .card { margin-top: 78px; }
.card-head {
  display: flex;
  align-items: center;
  gap: 19px;
  height: 78px;
  padding: 0 38px 0 29px;
  border-bottom: 1px solid #e5e7eb;
}
.card-head h2 { flex: 1; font-size: 19px; font-weight: 500; }
.link { font-size: 15px; font-weight: 500; }
.link.muted { color: #6b7280; font-weight: 400; }
.card dl { display: flex; flex-direction: column; padding: 27px 38px 25px 29px; }
.card dt { margin-bottom: 5px; font-weight: 500; color: #6b7280; }
.card dd + dt { margin-top: 20px; }

/* Maps */
.map { position: relative; overflow: hidden; border-radius: 0 8px 8px 0; font-family: Roboto, Arial, sans-serif; }
.map-art { position: absolute; inset: 0; width: 100%; height: 100%; }
.map-art path { vector-effect: non-scaling-stroke; }
.land { fill: #f3ecdd; }
.land-2 { fill: #f2eadb; }
.pale { fill: #fbf8f2; }
.pale-2 { fill: #f7f3e8; }
.sand, .sand-2 { fill: #ecdcc3; }
.park { fill: #bde3c9; }
.park-deep { fill: #93d3a8; }
.water { fill: #84b4fb; }
.city { fill: #e3e6ee; }
.dashes { fill: none; stroke: #7c7d80; stroke-width: 1.2; stroke-dasharray: 3 3; }
.border { fill: none; stroke: #56595d; stroke-width: 1.4; }
.minor { fill: none; stroke: #fac14f; stroke-width: 1.2; stroke-linejoin: round; }
.road-lines { fill: none; stroke-linejoin: round; }
.major { stroke: #f9c04f; stroke-width: 3.6; }
.major-core { stroke: #fdeec4; stroke-width: 1.4; }
.towns { fill: #fff; stroke: #5f6368; stroke-width: 1.3; }
.places text {
  font-size: 14px;
  text-anchor: middle;
  fill: #202124;
  stroke: #fff;
  stroke-width: 3;
  stroke-opacity: .8;
  stroke-linejoin: round;
  paint-order: stroke;
}
.places .country { font-size: 26px; font-weight: 700; fill: #111; }
.places .capital { font-size: 22px; font-weight: 500; }
.shields path { fill: #d95b5f; }
.shields text { font-size: 12px; font-weight: 700; text-anchor: middle; fill: #fff; }
.route { fill: none; stroke: #6455dc; stroke-opacity: .82; stroke-width: 7; stroke-linejoin: round; stroke-linecap: round; }
.capital-ring { fill: none; stroke: #111; stroke-width: 1.5; }
.map-edit {
  position: absolute;
  top: 10px;
  right: 11px;
  height: 31px;
  padding: 0 10px;
  border-radius: 8px;
  background: #fff;
  box-shadow: 0 1px 3px rgba(0, 0, 0, .12);
  font-family: Inter, sans-serif;
  font-size: 15px;
  font-weight: 500;
}
.google {
  position: absolute;
  left: 12px;
  bottom: 3px;
  font-family: Lato, sans-serif;
  font-size: 22px;
  font-weight: 500;
  line-height: 28px;
  text-shadow: 0 0 2px #fff, 0 0 2px #fff;
}
.g-blue { color: #4285f4; }
.g-red { color: #ea4335; }
.g-yellow { color: #fbbc04; }
.g-green { color: #34a853; }
.map-foot {
  position: absolute;
  right: 0;
  bottom: 0;
  display: flex;
  height: 17px;
  font-size: 12px;
  line-height: 17px;
  color: #111;
  background: rgba(245, 244, 240, .75);
}
.map-foot > * { padding: 0 7px; }
.map-foot .scale { display: flex; align-items: center; gap: 4px; padding-right: 9px; }
.bar { height: 6px; border: 2px solid #666; border-top: 0; }
.bar-50 { width: 54px; }
.bar-20 { width: 42px; }

/* Floating items */
.chat {
  position: fixed;
  right: 19px;
  bottom: 19px;
  display: grid;
  place-items: center;
  width: 67px;
  height: 67px;
  border-radius: 50%;
  background: #f43f5e;
}
.chat svg { width: 24px; height: 24px; fill: #fff; }
.chat-dots { fill: #f43f5e; }
.pointer { position: absolute; left: 845px; top: 130px; width: 12px; height: 20px; fill: #222; stroke: #fff; stroke-width: 1; filter: drop-shadow(0 1px 1px rgba(0, 0, 0, .4)); }
```
